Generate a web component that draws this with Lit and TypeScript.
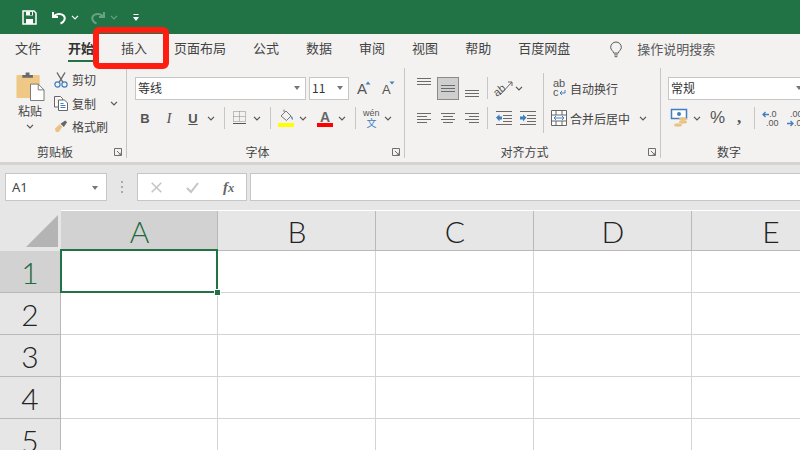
import { LitElement, html, css, svg, unsafeCSS } from "lit";
import { customElement } from "lit/decorators.js";

const chev = (c = "#5f5f5f", cls = "") =>
  html`<svg class=${cls} width="8" height="5" viewBox="0 0 8 5"><path d="M1 .8l3 3 3-3" stroke=${c} stroke-width="1.2" fill="none"/></svg>`;

const launcher = html`<svg width="8" height="8" viewBox="0 0 8 8"><path d="M.5 7.5V.5h7v7zM3 3l4 4M7 4.500V7H4.500" stroke="#6f6f6f" fill="none"/></svg>`;

const lines = (rows: [number, number, number][], w = 14, h = 14, color = "#6b6b6b") =>
  html`<svg width=${w} height=${h} viewBox="0 0 ${w} ${h}">${rows.map(
    ([x, y, l]) => svg`<rect x=${x} y=${y} width=${l} height="1" fill=${color}/>`
  )}</svg>`;

const indent = (dir: number) =>
  html`<svg width="16" height="14" viewBox="0 0 16 14">
    <path d="M0 .5h16M7 4.500h9M7 7.500h9M7 10.500h9M0 13.500h16" stroke="#6b6b6b" fill="none"/>
    <path d=${dir < 0 ? "M0 6.500l3.500-3v2H6v3H3.500v2z" : "M6.500 6.500l-3.500-3v2H0v3h3v2z"} fill="#3f7fc1"/>
  </svg>`;

const decimals = (more: boolean) =>
  html`<svg width="16" height="19" viewBox="0 0 16 19">
    ${more
      ? svg`<text x="6" y="8" class="dec">.0</text><text x="3" y="17" class="dec">.00</text>
            <path d="M0 5.500h6M2.500 3L0 5.500 2.500 8" stroke="#3f7fc1" stroke-width="1.300" fill="none"/>`
      : svg`<text x="3" y="8" class="dec">.00</text><text x="7" y="17" class="dec">.0</text>
            <path d="M0 14.500h6M3.500 12L6 14.500 3.500 17" stroke="#3f7fc1" stroke-width="1.300" fill="none"/>`}
  </svg>`;

const tabs = ["文件", "开始", "插入", "页面布局", "公式", "数据", "审阅", "视图", "帮助", "百度网盘"];
const cols = ["A", "B", "C", "D", "E"];
const rows = [1, 2, 3, 4, 5];

@customElement("app-root")
export class AppRoot extends LitElement {
  static styles = [
    css`
      :host {
        display: block;
        position: relative;
        width: 800px;
        height: 450px;
        overflow: hidden;
        background: #fff;
        color: #444;
        font-family: "Noto Sans CJK SC", "Noto Sans", sans-serif;
        font-size: 12px;
      }
      svg { display: block; flex: none; overflow: visible; }
      .title { height: 34px; background: #217346; display: flex; align-items: center; }
      .tabs { height: 32px; background: #f3f2f1; display: flex; align-items: flex-start; gap: 27px; padding-left: 15px; font-size: 13px; color: #444; }
      .tab { line-height: 24px; margin-top: 2px; }
      .tab.on { font-weight: 700; color: #333; }
      .tab.on::after { content: ""; display: block; height: 2px; background: #217346; }
      .tell { display: flex; align-items: center; gap: 14px; margin: 2px 0 0 12px; height: 24px; color: #5a5a5a; }
      .bulb { margin-top: 4px; }
      .ribbon { height: 96px; background: #f3f2f1; display: flex; border-bottom: 3px solid #d5d4d2; }
      .group { display: flex; flex-direction: column; border-right: 1px solid #c8c6c4; margin-top: 2px; height: 90px; padding-top: 8px; box-sizing: border-box; flex: none; }
      .g1 { width: 127px; }
      .g2 { width: 278px; }
      .g3 { width: 256px; }
      .g4 { width: 136px; border-right: none; }
      .body { flex: 1; display: flex; min-height: 0; }
      .foot { height: 16px; flex: none; display: flex; align-items: center; margin-bottom: -2px; }
      .foot .lb { flex: 1; text-align: center; font-size: 12px; line-height: 16px; color: #444; }
      .foot .ln { width: 16px; display: flex; justify-content: center; }
      .stack { display: flex; flex-direction: column; gap: 7px; flex: none; }
      .grow { flex: 1; }
      .r { display: flex; align-items: center; height: 24px; flex: none; }
      .r2 { height: 22px; }
      .vd { width: 1px; height: 22px; background: #c8c6c4; flex: none; }
      .combo { height: 23px; box-sizing: border-box; background: #fff; border: 1px solid #c6c6c6; display: flex; align-items: center; padding: 0 3px 2px 2px; justify-content: space-between; font-size: 12px; color: #333; flex: none; }
      .w171 { width: 171px; }
      .w40 { width: 40px; }
      .w140 { width: 140px; }
      .tri { width: 0; height: 0; border: 3.500px solid transparent; border-top: 4px solid #777; border-bottom: none; margin: 2px 2px 0 0; flex: none; }
      .paste { display: flex; flex-direction: column; align-items: center; width: 40px; margin: -4px 0 0 10px; }
      .paste .t { line-height: 20px; flex: none; color: #444; }
      .paste .c { margin-top: 3px; }
      .clipcol { display: flex; flex-direction: column; margin: -8px 0 0 4px; }
      .clipitem { display: flex; align-items: center; height: 23.500px; flex: none; gap: 4px; color: #444; }
      .clipitem svg:first-child { width: 14px; }
      .b { width: 12px; text-align: center; font-weight: 700; font-size: 13px; font-family: "Liberation Sans", sans-serif; color: #555; flex: none; }
      .i { font-style: italic; font-family: "Liberation Serif", serif; font-size: 15px; font-weight: 400; }
      .u { text-decoration: underline; }
      .sel { width: 22px; height: 23px; background: #cfcfcf; border: 1px solid #8a8a8a; box-sizing: border-box; display: flex; align-items: center; justify-content: center; flex: none; }
      .wrapcol { display: flex; flex-direction: column; gap: 7px; flex: none; }
      .wi { display: flex; align-items: center; height: 24px; flex: none; }
      .wi2 { height: 22px; }
      .bigvd { width: 1px; height: 60px; background: #c8c6c4; margin-top: -3px; flex: none; }
      .pct { font-size: 17px; color: #555; font-family: "Liberation Sans", sans-serif; width: 14px; text-align: center; flex: none; }
      .comma { font-size: 17px; font-weight: 700; color: #555; font-family: "Liberation Serif", serif; line-height: 12px; flex: none; }
      .dec { font: 9px "Liberation Sans", sans-serif; fill: #555; }
      .abx { font: 11px "Liberation Sans", sans-serif; fill: #555; }
      .wen { font: 9px "Liberation Sans", sans-serif; fill: #555; }
      .wenz { font: 10px "Noto Sans CJK SC", sans-serif; fill: #3f7fc1; }
      .aa { font: 15px "Liberation Sans", sans-serif; fill: #555; }
      .aas { font-size: 13px; }
      .aab { font: 700 14px "Liberation Sans", sans-serif; fill: #666; }
      .fbar { height: 45px; box-sizing: border-box; background: #e6e6e6; padding: 8px 0 0 5px; display: flex; }
      .namebox { width: 102px; height: 28px; box-sizing: border-box; background: #fff; border: 1px solid #c6c6c6; display: flex; align-items: center; justify-content: space-between; padding: 0 6px; font: 13px "Noto Sans", sans-serif; color: #444; }
      .dots { width: 30px; display: flex; flex-direction: column; align-items: center; justify-content: center; gap: 3px; height: 28px; }
      .dots i { width: 2px; height: 2px; background: #aaa; display: block; }
      .fxbox { width: 110px; height: 28px; box-sizing: border-box; background: #fff; border: 1px solid #c6c6c6; display: flex; align-items: center; }
      .fx { font: italic 700 15px "Liberation Serif", serif; color: #666; margin-left: 24px; }
      .finput { flex: 1; height: 28px; box-sizing: border-box; background: #fff; border: 1px solid #c6c6c6; border-right: none; margin-left: 3px; }
      .sheet { display: grid; grid-template-columns: 61px 157px repeat(4, 158px); grid-template-rows: 41px repeat(5, 42px); background: #fff; }
      .corner { background: #e6e6e6; display: flex; align-items: flex-end; justify-content: flex-end; padding: 0 3px 4px 0; box-sizing: border-box; }
      .ch { background: #e6e6e6; border-right: 1px solid #b9b9b9; border-bottom: 1px solid #b9b9b9; box-sizing: border-box; text-align: center; padding-left: 1px; font: 300 30px/40px Lato, "Noto Sans", sans-serif; color: #222; margin-top: 1px; }
      .ch.on { background: #d2d2d2; color: #1d6b40; }
      .rh { background: #e6e6e6; border-bottom: 1px solid #b9b9b9; border-right: 1px solid #b9b9b9; box-sizing: border-box; text-align: center; font: 300 30px/42px Lato, "Noto Sans", sans-serif; color: #222; }
      .rh.on { background: #d2d2d2; color: #1d6b40; }
      .cell { border-right: 1px solid #d4d4d4; border-bottom: 1px solid #d4d4d4; box-sizing: border-box; position: relative; }
      .active::after { content: ""; position: absolute; left: -1px; top: -2px; right: -1px; bottom: -1px; border: 2px solid #217346; }
      .active::before { content: ""; position: absolute; z-index: 1; right: -3px; bottom: -3px; width: 5px; height: 5px; background: #217346; border: 1px solid #fff; box-sizing: content-box; margin: -1px; }
      .mark { position: absolute; left: 93px; top: 27px; width: 76px; height: 42px; box-sizing: border-box; border: 6px solid #ff1d12; border-radius: 6px; }
    `,
    unsafeCSS(Array.from({ length: 40 }, (_, i) => `.m${i}{margin-left:${i}px}`).join("")),
  ];

  private titleBar() {
    return html`<div class="title">
      <svg class="m22" width="15" height="15" viewBox="0 0 15 15"><path d="M1 1h11l2 2v11H1z" fill="none" stroke="#fff" stroke-width="1.500"/><path d="M4 1.500h7v4H4zM4 9h7v5H4z" fill="#fff"/><rect x="8" y="2" width="2" height="3" fill="#217346"/></svg>
      <svg class="m14" width="16" height="15" viewBox="0 0 16 15"><path d="M2 2v5h5" fill="none" stroke="#fff" stroke-width="2"/><path d="M2.500 6.500C5 3.500 10 3 12.500 5.500s1 6.500-3 8" fill="none" stroke="#fff" stroke-width="2"/></svg>
      ${chev("#fff", "m4")}
      <svg class="m11" width="16" height="15" viewBox="0 0 16 15"><path d="M14 2v5H9" fill="none" stroke="#6aa184" stroke-width="2"/><path d="M13.500 6.500C11 3.500 6 3 3.500 5.500s-1 6.500 3 8" fill="none" stroke="#6aa184" stroke-width="2"/></svg>
      ${chev("#6aa184", "m4")}
      <svg class="m15" width="6" height="7" viewBox="0 0 6 7"><path d="M.5.500h5" stroke="#fff" fill="none"/><path d="M0 3h6L3 7z" fill="#fff"/></svg>
    </div>`;
  }

  private tabBar() {
    return html`<div class="tabs">
      ${tabs.map((t, i) => html`<div class="tab ${i === 1 ? "on" : ""}">${t}</div>`)}
      <div class="tell">
        <svg class="bulb" width="14" height="16" viewBox="0 0 14 18"><path d="M4.500 12.500C4 10 1 9 1 6a6 6 0 0112 0c0 3-3 4-3.500 6.500zM5 14.500h4M5.500 16.500h3" fill="none" stroke="#555" stroke-width="1.100"/></svg>
        <span>操作说明搜索</span>
      </div>
    </div>`;
  }

  private clipboard() {
    return html`<div class="group g1">
      <div class="body">
        <div class="paste">
          <svg width="29" height="29" viewBox="0 0 29 30">
            <rect x="0" y="3" width="24" height="24" rx="1" fill="#f0c885"/>
            <path d="M6 6V3h3.500V.5h4V3H17v3z" fill="#6a6a6a"/>
            <path d="M14.500 12.500h8l6 6v11h-14z" fill="#fff" stroke="#777"/>
            <path d="M22.500 12.500v6h6" fill="none" stroke="#777"/>
          </svg>
          <div class="t">粘贴</div>
          ${chev("#555", "c")}
        </div>
        <div class="clipcol">
          <div class="clipitem">
            <svg height="16" viewBox="0 0 14 16"><path d="M3 .5l6 10M11 .5l-6 10" stroke="#666" stroke-width="1.400" fill="none"/><circle cx="3.500" cy="12.500" r="2.600" fill="none" stroke="#3f7fc1" stroke-width="1.200"/><circle cx="10.500" cy="12.500" r="2.600" fill="none" stroke="#3f7fc1" stroke-width="1.200"/></svg>
            <span>剪切</span>
          </div>
          <div class="clipitem">
            <svg height="15" viewBox="0 0 14 15"><path d="M.5.5h6l2 2V4M.5.5V11H4" fill="#fff" stroke="#666"/><path d="M4.500 4h6l3 3v7.500h-9z" fill="#fff" stroke="#666"/><path d="M6.500 7.500h3M6.500 9.500h5M6.500 11.500h5" stroke="#3f7fc1"/></svg>
            <span>复制</span>
            ${chev("#555", "m10")}
          </div>
          <div class="clipitem">
            <svg height="13" viewBox="0 0 15 13"><path d="M1 9l5-5 3 3-4 5.500H2z" fill="#e8c384"/><path d="M7 3.500l5-3.500 2 2-3.500 5z" fill="#666"/></svg>
            <span>格式刷</span>
          </div>
        </div>
      </div>
      <div class="foot"><div class="lb">剪贴板</div><div class="ln">${launcher}</div></div>
    </div>`;
  }

  private font() {
    return html`<div class="group g2">
      <div class="stack grow m8">
        <div class="r">
          <div class="combo w171">等线<span class="tri"></span></div>
          <div class="combo w40 m3"><span>11</span><span class="tri"></span></div>
          <svg class="m8" width="14" height="15" viewBox="0 0 14 15"><text x="0" y="13" class="aa">A</text><path d="M8.500 3.500L11 .5l2.500 3z" fill="#3f7fc1"/></svg>
          <svg class="m10" width="14" height="15" viewBox="0 0 14 15"><text x="1" y="13" class="aa aas">A</text><path d="M8.500 .5L11 3.500l2.500-3z" fill="#3f7fc1"/></svg>
        </div>
        <div class="r r2">
          <span class="b m4">B</span>
          <span class="b i m12">I</span>
          <span class="b u m12">U</span>
          ${chev("#555", "m8")}
          <span class="vd m9"></span>
          <svg class="m8" width="13" height="14" viewBox="0 0 13 14"><path d="M.5.500h12v10H.500zM.5 5.500h12M6.500.5v10" fill="none" stroke="#888" stroke-dasharray="1 1"/><path d="M0 12.500h13" stroke="#555"/></svg>
          ${chev("#555", "m7")}
          <span class="vd m9"></span>
          <svg class="m7" width="16" height="18" viewBox="0 0 16 18"><path d="M3 7l5-5 5 5-4.500 4.500L3 7zM6 3V.5" fill="none" stroke="#777"/><path d="M13 7c1.500 1 2.500 2 1.500 4-1-1-1.500-2-1.500-4z" fill="#3f7fc1"/><rect y="14" width="16" height="4" fill="#ffff00"/></svg>
          ${chev("#555", "m5")}
          <svg class="m10" width="16" height="18" viewBox="0 0 16 18"><text x="3" y="13" class="aab">A</text><rect y="14" width="16" height="4" fill="#f00"/></svg>
          ${chev("#555", "m5")}
          <span class="vd m9"></span>
          <svg class="m7" width="17" height="20" viewBox="0 0 17 20"><text x="0" y="8" class="wen">wén</text><text x="3.500" y="19" class="wenz">文</text></svg>
          ${chev("#555", "m4")}
        </div>
      </div>
      <div class="foot"><div class="lb">字体</div><div class="ln">${launcher}</div></div>
    </div>`;
  }

  private align() {
    const l3 = (y: number) => lines([[0, y, 14], [0, y + 3, 14], [0, y + 6, 14]], 14, 20);
    const h = (r: [number, number, number][]) => lines(r);
    return html`<div class="group g3">
      <div class="body">
        <div class="stack m12">
          <div class="r">
            ${l3(0)}
            <span class="sel m6">${lines([[0, 0, 14], [0, 3, 14], [0, 6, 14]], 14, 7)}</span>
            <span class="m6">${l3(12)}</span>
            <span class="vd m8"></span>
            <svg class="m7" width="18" height="18" viewBox="0 0 18 18"><text x="-1" y="14" class="abx" transform="rotate(-38 6 12)">ab</text><path d="M5 16L17 3M13 3h4v4" stroke="#666" fill="none"/></svg>
            ${chev("#555", "m2")}
          </div>
          <div class="r r2">
            ${h([[0, 2, 14], [0, 5, 10], [0, 8, 14], [0, 11, 10]])}
            <span class="m10">${h([[0, 2, 14], [2, 5, 10], [0, 8, 14], [2, 11, 10]])}</span>
            <span class="m10">${h([[0, 2, 14], [4, 5, 10], [0, 8, 14], [4, 11, 10]])}</span>
            <span class="vd m8"></span>
            <span class="m8">${indent(-1)}</span>
            <span class="m8">${indent(1)}</span>
          </div>
        </div>
        <span class="bigvd m7"></span>
        <div class="wrapcol m7">
          <div class="wi">
            <svg class="m2" width="13" height="18" viewBox="0 0 13 18"><text x="0" y="8" class="abx">ab</text><text x="0" y="17" class="abx">c</text><path d="M12 11v3H7M9 12l-2 2 2 2" stroke="#3f7fc1" fill="none"/></svg>
            <span class="m4">自动换行</span>
          </div>
          <div class="wi wi2">
            <svg width="16" height="16" viewBox="0 0 16 16"><path d="M.5.5h15v15H.5zM.5 5h15M.5 11h15M5 .5V5M11 .5V5M5 11v4.500M11 11v4.500" fill="#fff" stroke="#666"/><path d="M3 8h10M5 6L3 8l2 2M11 6l2 2-2 2" stroke="#3f7fc1" fill="none"/></svg>
            <span class="m3">合并后居中</span>
            ${chev("#555", "m9")}
          </div>
        </div>
      </div>
      <div class="foot"><div class="lb">对齐方式</div><div class="ln">${launcher}</div></div>
    </div>`;
  }

  private number() {
    return html`<div class="group g4">
      <div class="stack grow m7">
        <div class="r"><div class="combo w140">常规<span class="tri"></span></div></div>
        <div class="r r2">
          <svg class="m3" width="17" height="18" viewBox="0 0 17 18"><rect x=".5" y=".5" width="15" height="9" fill="#fff" stroke="#3f7fc1" stroke-width="1.500"/><circle cx="8" cy="5" r="2" fill="#3f7fc1"/><ellipse cx="12" cy="10" rx="4" ry="1.700" fill="#e8c384"/><ellipse cx="12" cy="13" rx="4" ry="1.700" fill="#e8c384"/><ellipse cx="7" cy="16" rx="4" ry="1.700" fill="#e8c384"/></svg>
          ${chev("#555", "m5")}
          <span class="pct m9">%</span>
          <span class="comma m13">,</span>
          <span class="vd m13"></span>
          <span class="m8">${decimals(true)}</span>
          <span class="m8">${decimals(false)}</span>
        </div>
      </div>
      <div class="foot"><div class="lb">数字</div></div>
    </div>`;
  }

  private formulaBar() {
    return html`<div class="fbar">
      <div class="namebox"><span>A1</span><span class="tri"></span></div>
      <div class="dots"><i></i><i></i><i></i></div>
      <div class="fxbox">
        <svg class="m13" width="11" height="11" viewBox="0 0 11 11"><path d="M.7.7l9.600 9.600M10.300.7L.7 10.300" stroke="#c4c4c4" stroke-width="1.500" fill="none"/></svg>
        <svg class="m24" width="13" height="11" viewBox="0 0 13 11"><path d="M1 6l4 4 7-9" stroke="#c4c4c4" stroke-width="2" fill="none"/></svg>
        <span class="fx">f<small>x</small></span>
      </div>
      <div class="finput"></div>
    </div>`;
  }

  private sheet() {
    return html`<div class="sheet">
      <div class="corner"><svg width="32" height="32" viewBox="0 0 32 32"><path d="M32 0v32H0z" fill="#b4b4b4"/></svg></div>
      ${cols.map((c, i) => html`<div class="ch ${i === 0 ? "on" : ""}">${c}</div>`)}
      ${rows.map(
        (r) => html`<div class="rh ${r === 1 ? "on" : ""}">${r}</div>
          ${cols.map((_, i) => html`<div class="cell ${r === 1 && i === 0 ? "active" : ""}"></div>`)}`
      )}
    </div>`;
  }

  render() {
    return html`
      ${this.titleBar()} ${this.tabBar()}
      <div class="ribbon">${this.clipboard()} ${this.font()} ${this.align()} ${this.number()}</div>
      ${this.formulaBar()} ${this.sheet()}
      <div class="mark"></div>
    `;
  }
}
